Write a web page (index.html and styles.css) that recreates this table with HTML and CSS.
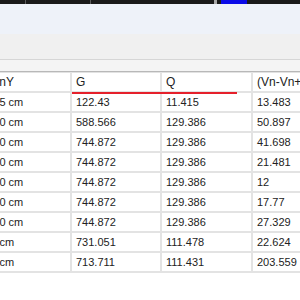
FILE: index.html
```html
<!DOCTYPE html>
<html>
<head>
<meta charset="utf-8">
<link rel="stylesheet" href="styles.css">
</head>
<body>
<div class="titlebar">
  <span class="tb-seg tb-a"></span>
  <span class="tb-seg tb-b"></span>
  <span class="tb-seg tb-c"></span>
  <span class="tb-blue"></span>
</div>
<div class="ribbon"></div>
<div class="toolbar"></div>
<div class="subbar"></div>
<div class="grid">
  <table class="data">
    <colgroup>
      <col class="c1"><col class="c2"><col class="c3"><col class="c4">
    </colgroup>
    <thead>
      <tr><th>SpanY</th><th>G</th><th>Q</th><th>(Vn-Vn+)</th></tr>
    </thead>
    <tbody>
      <tr><td>187.5 cm</td><td>122.43</td><td>11.415</td><td>13.483</td></tr>
      <tr><td>240.0 cm</td><td>588.566</td><td>129.386</td><td>50.897</td></tr>
      <tr><td>240.0 cm</td><td>744.872</td><td>129.386</td><td>41.698</td></tr>
      <tr><td>240.0 cm</td><td>744.872</td><td>129.386</td><td>21.481</td></tr>
      <tr><td>240.0 cm</td><td>744.872</td><td>129.386</td><td>12</td></tr>
      <tr><td>240.0 cm</td><td>744.872</td><td>129.386</td><td>17.77</td></tr>
      <tr><td>240.0 cm</td><td>744.872</td><td>129.386</td><td>27.329</td></tr>
      <tr><td>240 cm</td><td>731.051</td><td>111.478</td><td>22.624</td></tr>
      <tr><td>240 cm</td><td>713.711</td><td>111.431</td><td>203.559</td></tr>
    </tbody>
  </table>
  <div class="mark"></div>
</div>
</body>
</html>
```
FILE: styles.css
```css
html, body {
  margin: 0;
  padding: 0;
  background: #ffffff;
  overflow: hidden;
}
body {
  font-family: "Liberation Sans", Arial, sans-serif;
  font-size: 11px;
  color: #222222;
}
.titlebar {
  height: 4px;
  background: #1a1a1a;
  display: flex;
}
.tb-seg {
  height: 4px;
  border-right: 1px solid #5a5a5a;
}
.tb-a { width: 25px; }
.tb-b { width: 64px; }
.tb-c { width: 123px; border-right: 3px solid #a8a8a8; }
.tb-blue {
  margin-left: 4px;
  width: 26px;
  height: 4px;
  background: #0a0ae8;
}
.ribbon {
  height: 30px;
  background: #eef2f9;
}
.toolbar {
  height: 25px;
  background: #f0f0f0;
  border-bottom: 1px solid #d6d6d6;
}
.subbar {
  height: 11px;
  background: #f4f4f4;
  border-bottom: 1px solid #b8b8b8;
  box-shadow: 0 1px 0 #e2e2e2;
}
.grid {
  position: relative;
  overflow: hidden;
}
.data {
  margin-left: -26px;
  border-collapse: collapse;
  table-layout: fixed;
  width: 378px;
}
.c1 { width: 97px; }
.c2 { width: 90px; }
.c3 { width: 91px; }
.c4 { width: 100px; }
.data th, .data td {
  height: 18px;
  padding: 0 0 0 4px;
  text-align: left;
  font-weight: normal;
  white-space: nowrap;
  overflow: hidden;
  border-right: 2px solid #e3e3e3;
  border-bottom: 2px solid #e3e3e3;
}
.data th {
  height: 18px;
  padding-top: 1px;
  font-size: 12px;
}
.mark {
  position: absolute;
  left: 72px;
  top: 20px;
  width: 165px;
  height: 2px;
  background: #e5202b;
}
```
